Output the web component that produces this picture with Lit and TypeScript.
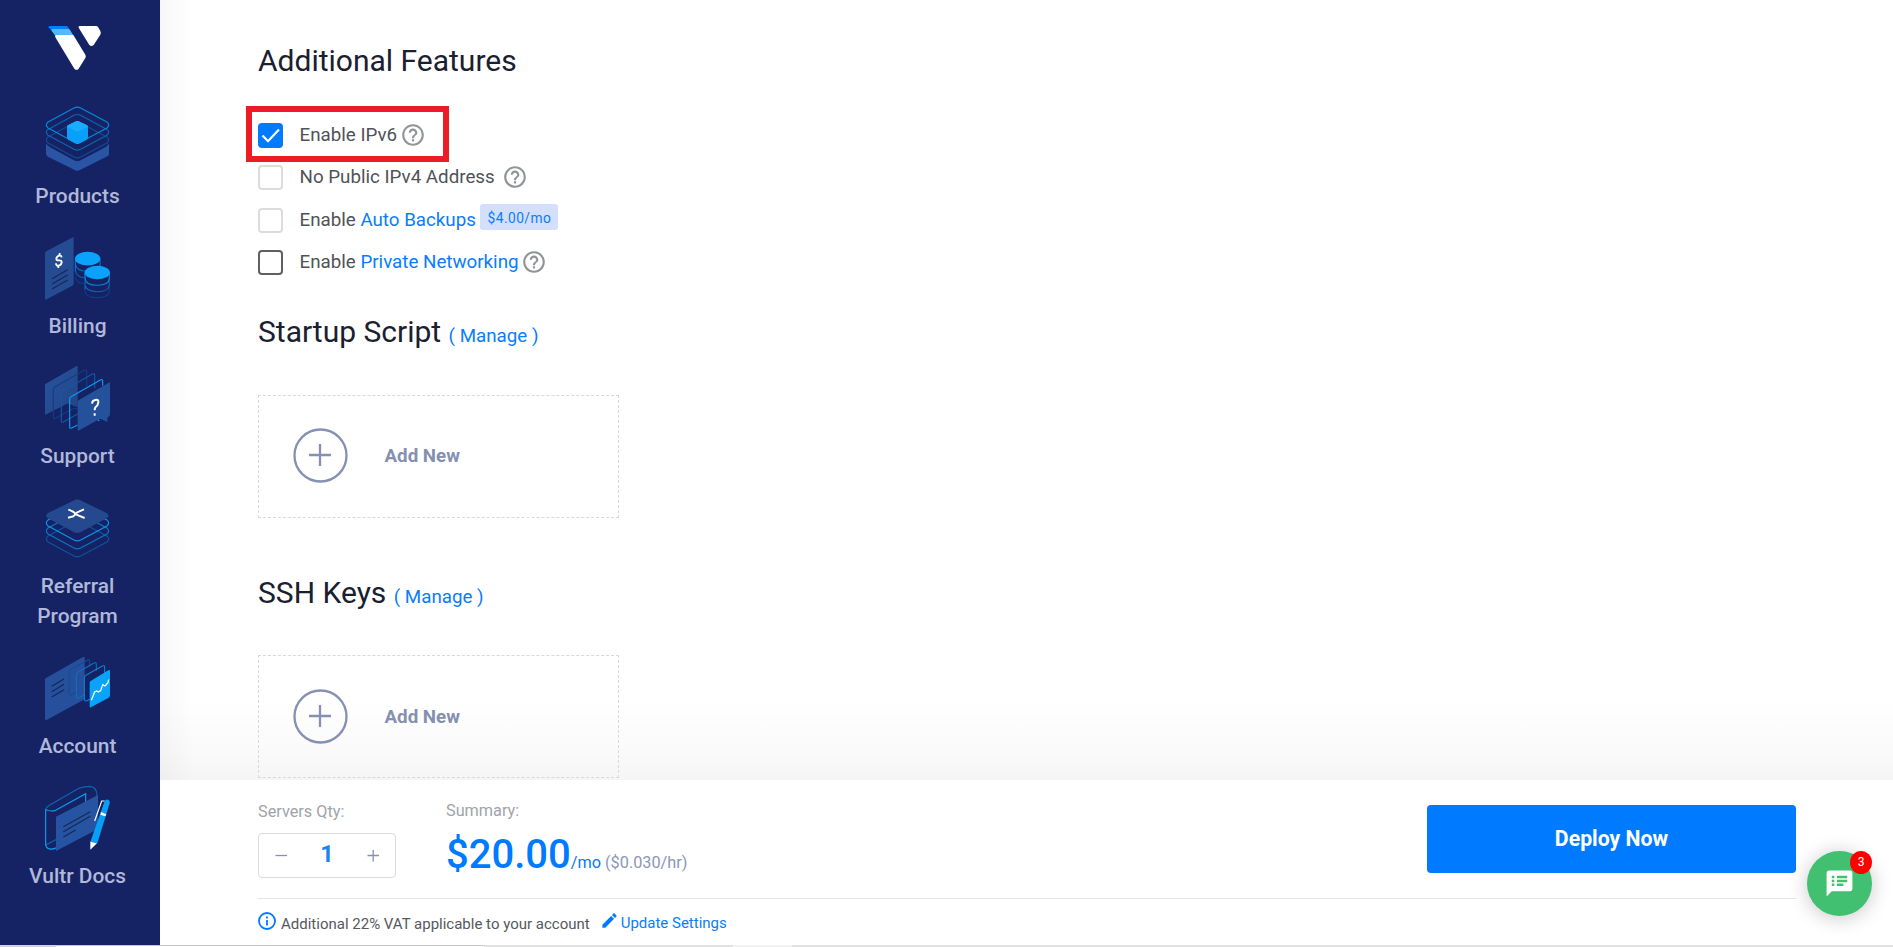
import { LitElement, html, css, svg } from "lit";
import { customElement } from "lit/decorators.js";

const help = html`<svg class="help" viewBox="0 0 24 24"><path d="M11 18h2v-2h-2v2zm1-16C6.480 2 2 6.480 2 12s4.480 10 10 10 10-4.480 10-10S17.520 2 12 2zm0 18c-4.410 0-8-3.590-8-8s3.590-8 8-8 8 3.590 8 8-3.590 8-8 8zm0-14c-2.210 0-4 1.790-4 4h2c0-1.100.9-2 2-2s2 .9 2 2c0 2-3 1.750-3 5h2c0-2.250 3-2.500 3-5 0-2.210-1.790-4-4-4z"/></svg>`;

const diamond = (y: number, c: string) =>
  svg`<path fill="none" stroke-width="3.600" stroke=${c} transform="translate(0 ${y})" d="M222 -51Q232 -56 242 -51L322 -8Q330 0 322 8L242 51Q232 56 222 51L143 8Q135 0 143 -8Z"/>`;

const icons: Record<string, unknown> = {
  products: html`<svg class="pic" viewBox="135 321 195 195">
    <path fill="#2a55a5" d="M138 430Q140 437 150 442L222 481Q232 487 242 481L316 442Q325 437 327 430V462Q327 466 322 469L240 510Q232 514 224 510L144 470Q138 466 138 462Z"/>
    ${diamond(420, "#104c94")}${diamond(397, "#0d63b0")}${diamond(375, "#0a86d8")}
    <path fill="#08a0f8" d="M201 381Q201 377 205 375L228 364Q232 362 236 364L260 375Q264 377 264 381V412Q264 417 260 419L237 431Q232 433 228 431L205 419Q201 417 201 412Z"/>
    <path fill="#19acff" d="M201 380Q201 377 205 375L228 364Q232 362 236 364L260 375Q264 377 264 380L237 394Q232 396 228 394Z"/></svg>`,
  billing: html`<svg class="pic" viewBox="135 51 195 195">
    <path fill="#254c92" d="M135 99Q135 96 139 94L216 53Q221 50 221 55V190Q221 194 217 197L140 238Q135 241 135 236Z"/>
    <g fill="none" stroke="#fff" stroke-width="5.500"><path d="M185 112Q184 105 177 107Q169 110 169 117Q169 122 177 121Q185 120 185 127Q184 135 176 137Q168 138 168 130M179 99L178 108M175 136V144"/></g>
    <path d="M156 176L203 149M156 192L203 165M156 207L203 180" stroke="#162556" stroke-width="3.500"/>
    <g fill="none" stroke-width="3.200"><path stroke="#123d87" d="M226 172Q229 191 258 191"/><path stroke="#105aa7" d="M226 152Q229 173 256 174"/><path stroke="#087bcf" d="M226 132Q229 154 263 154T300 134M226 118V154M300 118V140"/></g>
    <ellipse cx="263" cy="116" rx="38" ry="20.500" fill="#0aa2fa"/>
    <g fill="none" stroke-width="3.200"><path stroke="#114283" d="M255 213Q257 233 292 233T328 213V195"/><path stroke="#1063b0" d="M255 194Q257 215 292 215T328 194V175M255 158V210"/><path stroke="#0984d7" d="M255 175Q257 196 292 196T328 175V158M255 158V175"/></g>
    <ellipse cx="292" cy="157.500" rx="38" ry="20.500" fill="#0aa2fa"/></svg>`,
  support: html`<svg class="pic" viewBox="135 441 195 195">
    <defs><linearGradient id="sg" x2="1" y2="1"><stop stop-color="#28549f"/><stop offset="1" stop-color="#234485"/></linearGradient></defs>
    <path fill="url(#sg)" d="M135 493L230 438Q233 437 233 441V562L206 551Q201 550 198 553L139 583Q135 585 135 581Z"/>
    <g fill="none" stroke-width="3.400"><path stroke="#123e84" d="M164 501Q160 503 160 510V591Q160 598 166 595L212 570Q224 562 233 568M164 501L253 451Q260 448 260 455V500"/><path stroke="#0d5aa7" d="M188 513Q184 515 184 521V602Q184 609 190 606L233 582M188 513L277 462Q284 459 284 465V505"/><path stroke="#0a9df4" d="M213 530Q209 532 209 538V620Q209 627 215 624L233 615M213 530L301 480Q308 476 308 484V497"/></g>
    <path fill="#25509a" d="M233 545Q233 542 237 540L326 488Q330 485 330 490V582Q330 588 325 591L322 593V606L304 598Q300 596 297 598L238 631Q233 634 233 629Z"/>
    <path d="M293 600l5 2" stroke="#0aa2fa" stroke-width="4"/>
    <path fill="none" stroke="#fff" stroke-width="6" d="M276 551Q277 541 286 540Q296 537 295 547Q294 556 287 561Q284 564 284 571M284 580V587"/></svg>`,
  referral: html`<svg class="pic" viewBox="135 51 195 195">
    ${diamond(177, "#0e529c")}${diamond(153, "#0a75c6")}${diamond(129, "#0995e9")}
    <path fill="#24498f" d="M220 62Q232 55 244 62L320 99Q331 107 320 115L244 155Q232 162 220 155L144 115Q133 107 144 99Z"/>
    <path fill="none" stroke="#fff" stroke-width="6" d="M205 89L213 92Q220 94 223 98Q228 104 236 107L254 114M204 113L212 111Q221 110 224 105Q228 97 238 94L252 88"/></svg>`,
  account: html`<svg class="pic" viewBox="135 531 195 195">
    <path fill="#26509b" d="M135 598Q135 596 138 594L249 531Q254 529 254 534V658L141 719Q135 722 135 716Z"/>
    <path d="M155 619L192 597M155 635L192 613M155 651L192 629" stroke="#162556" stroke-width="3.500"/>
    <g fill="none" stroke-width="3.200"><path stroke="#174b95" d="M214 568Q208 571 208 577V640Q208 648 215 644L230 636M214 568L263 540Q269 537 269 544V560"/><path stroke="#0d70c0" d="M235 576Q229 579 229 585V649Q229 658 236 654L254 644M235 576L282 549Q289 546 289 553V572"/><path stroke="#0a83d5" d="M259 585Q253 588 253 594V655Q253 666 261 662L269 658M259 585L307 558Q314 555 314 562V579"/></g>
    <path fill="#08a4fb" d="M269 608Q269 605 272 603L325 571Q330 568 330 573V645Q330 650 326 653L274 681Q269 684 269 679Z"/>
    <path fill="none" stroke="#fff" stroke-width="3.800" d="M274 661L284 636L290 633L295 636L302 632L308 614L315 618L324 608L326 599"/></svg>`,
  docs: html`<svg class="pic" viewBox="135 201 195 195">
    <g fill="none" stroke-width="3.400"><path stroke="#0b67b5" d="M137 268Q137 264 148 256L237 205Q252 199 270 199Q290 202 291 224V236M137 375L170 358M170 383Q160 390 148 388"/><path stroke="#08a0f6" d="M137 268V374Q139 388 155 387L168 384M137 268Q148 276 167 271L257 221V250"/></g>
    <path fill="#2654a2" d="M168 290L294 225V327L168 393Z"/>
    <path d="M190 320L271 275M190 335L271 289M190 351L227 330" stroke="#17284f" stroke-width="3.500"/>
    <path fill="none" stroke="#fff" stroke-width="3.500" d="M284 303L305 243H314"/>
    <path fill="#08a0f6" d="M314 243Q318 237 325 239Q331 243 329 250L292 370L271 366Z"/>
    <path fill="#fff" d="M303 276L319 283L316 289L301 284ZM271 365L291 370L271 389Z"/></svg>`,
};

const nav: [string, string][] = [
  ["products", "Products"], ["billing", "Billing"], ["support", "Support"],
  ["referral", "Referral Program"], ["account", "Account"], ["docs", "Vultr Docs"],
];

@customElement("side-nav")
class SideNav extends LitElement {
  static styles = css`
    :host { display: block; background: #152364; width: 160px; box-sizing: border-box; padding: 25px 5px 0 0; }
    .logo { display: block; width: 54px; height: 46px; margin: 0 0 36px 48px; }
    .item { display: flex; flex-direction: column; align-items: center; margin-bottom: 26px; }
    .pic { width: 65px; height: 65px; overflow: visible; display: block; margin-bottom: 9px; }
    .label { font: 500 20.900px/30px Roboto, sans-serif; color: #b1b8d9; text-align: center; width: 110px; }
  `;
  render() {
    return html`<svg class="logo" viewBox="144 75 162 138">
        <path fill="#0080ff" d="M149 78H198Q202 78 204 81L213 96H158L146 82Q145 78 149 78Z"/>
        <path fill="#51b9ff" d="M158 87H204Q208 87 210 90L220 106L168 110L155 92Q154 87 158 87Z"/>
        <path fill="#fff" d="M168 105H220L256 164Q259 169 256 174L236 206Q230 213 223 206L166 112Q164 106 168 105ZM239 78H288Q292 78 294 81L301 93Q304 98 301 104L281 135Q274 141 268 135L236 83Q234 78 239 78Z"/></svg>
      ${nav.map(([k, l]) => html`<div class="item">${icons[k]}<div class="label">${l}</div></div>`)}`;
  }
}

@customElement("app-root")
class AppRoot extends LitElement {
  static styles = css`
    :host { display: block; width: 1893px; height: 947px; overflow: hidden; position: relative; font-family: Roboto, sans-serif; background: #fff; }
    .shell { display: grid; grid-template-columns: 160px 1733px; height: 945px; }
    .right { display: grid; grid-template-rows: 780px 165px; }
    .main { padding: 43px 0 0 98px; box-sizing: border-box; overflow: hidden;
      background: linear-gradient(90deg, rgba(0,0,0,.03), transparent 34px), linear-gradient(0deg, rgba(0,0,0,.04), rgba(0,0,0,.018) 30px, transparent 80px), #fff; }
    h2 { margin: 0; font-weight: 400; font-size: 30px; line-height: 36px; color: #1a202f; }
    .manage { font-size: 18.750px; color: #0a7cff; }
    .opts { margin-top: 44px; height: 191px; display: grid; grid-auto-rows: 42.400px; align-content: start; }
    .opt { display: flex; align-items: flex-start; font-size: 18.750px; line-height: 24px; color: #4f5357; white-space: pre; }
    .box { width: 25px; height: 25px; box-sizing: border-box; border: 2px solid #dcdcdc; border-radius: 4px; margin-right: 16.500px; flex: none; }
    .box.on { border: 0; background: #007bff; }
    .box.on svg { display: block; width: 25px; height: 25px; }
    .box.dark { border-color: #5f6064; }
    .link { color: #0a7cff; }
    .help { width: 26px; height: 26px; fill: #919599; margin: -1px 0 0 2.500px; }
    .tag { background: #d3dffb; color: #0a7cff; border-radius: 3px; font-size: 13.750px; letter-spacing: .45px; width: 78px; height: 26px; line-height: 28px; text-align: center; margin: -4px 0 0 4.500px; }
    .add { width: 361px; height: 123px; box-sizing: border-box; border: 1px dashed #d9d9d9; margin: 41px 0 57px; display: flex; align-items: center; padding: 0 0 1px 34px; }
    .add.last { margin-top: 40px; padding-bottom: 0; }
    .add svg { width: 56px; height: 56px; margin-right: 35.500px; fill: none; stroke: #8590b3; stroke-width: 2.300; }
    .add b { font-size: 18.750px; font-weight: 700; color: #8590b0; }
    .foot { background: #fff; padding: 0 97px 0 98px; display: flex; flex-direction: column; }
    .bar { height: 119px; border-bottom: 1px solid #e3e5ea; display: flex; align-items: flex-start; box-sizing: border-box; }
    .cap { font-size: 16.250px; line-height: 20px; color: #a0a4a9; }
    .qty { padding-top: 22px; width: 188px; }
    .step { width: 138px; height: 45px; margin-top: 11px; box-sizing: border-box; border: 1px solid #d9dce0; border-radius: 4px; display: flex; align-items: center; justify-content: space-between; padding: 0 14px; }
    .step svg { width: 16px; height: 16px; margin-top: -2px; stroke: #8590b3; stroke-width: 1.300; fill: none; }
    .step b { font-size: 23.750px; font-weight: 700; color: #1a85ec; margin-top: -3px; }
    .sum { padding-top: 21px; flex: 1; }
    .price { display: flex; align-items: baseline; color: #007bff; font-size: 16.250px; line-height: 46px; white-space: pre; margin-top: 11px; }
    .price b { font-size: 40px; font-weight: 500; }
    .hr { color: #8c96b8; }
    .deploy { margin-top: 25px; width: 369px; height: 68px; border: 0; border-radius: 4px; background: #007bff; color: #fff; font: 700 21.250px Roboto, sans-serif; padding: 0 0 1px; }
    .vat { display: flex; align-items: flex-start; padding-top: 11px; font-size: 15px; line-height: 28px; color: #55595e; }
    .info { width: 20px; height: 20px; margin: 1px 4px 0 -1px; }
    .pen { width: 19px; height: 19px; margin: 1px 2px 0 10px; fill: #007bff; }
    .vat .link { line-height: 26px; }
    .strip { height: 2px; background: linear-gradient(90deg, #d3d3e2 56px, transparent 56px, transparent 484px, #e0e0e0 484px, #e0e0e0 733px, #f2f2f2 733px, #f2f2f2 792px, #e0e0e0 792px), linear-gradient(#c6c6c6 1px, #fff 1px); }
    .mark { position: absolute; left: 246px; top: 106px; width: 203px; height: 56px; box-sizing: border-box; border: 6px solid #ed1c24; }
    .chat { position: absolute; left: 1807px; top: 851px; width: 65px; height: 65px; border-radius: 50%; background: #42c072; box-shadow: 0 2px 20px rgba(0,0,0,.22); }
    .chat svg { display: block; width: 31px; height: 31px; margin: 17px; fill: #fff; }
    .count { position: absolute; right: 0; top: 0; width: 22px; height: 23px; line-height: 23px; border-radius: 50%; background: #f00; color: #fff; font-size: 12px; text-align: center; }
  `;
  add(cls = "add") {
    return html`<div class=${cls}><svg viewBox="0 0 56 56"><circle cx="27.500" cy="27.500" r="26"/><path d="M16 27H38M27 16V38"/></svg><b>Add New</b></div>`;
  }
  render() {
    return html`
      <div class="shell">
        <side-nav></side-nav>
        <div class="right">
          <main class="main">
            <h2>Additional Features</h2>
            <div class="opts">
              <div class="opt"><span class="box on"><svg viewBox="0 0 25 25"><path d="M4.500 12.500L10 18.200L21 6.500" fill="none" stroke="#fff" stroke-width="2.200"/></svg></span><span class="t">Enable IPv6</span>${help}</div>
              <div class="opt"><span class="box"></span><span class="t">No Public IPv4 Address </span>${help}</div>
              <div class="opt"><span class="box"></span><span class="t">Enable <span class="link">Auto Backups</span></span><span class="tag">$4.00/mo</span></div>
              <div class="opt"><span class="box dark"></span><span class="t">Enable <span class="link">Private Networking</span></span>${help}</div>
            </div>
            <h2>Startup Script <span class="manage">( Manage )</span></h2>
            ${this.add()}
            <h2>SSH Keys <span class="manage">( Manage )</span></h2>
            ${this.add("add last")}
          </main>
          <footer class="foot">
            <div class="bar">
              <div class="qty"><div class="cap">Servers Qty:</div>
                <div class="step"><svg viewBox="0 0 16 16"><path d="M2.500 8.500H14"/></svg><b>1</b><svg viewBox="0 0 16 16"><path d="M2.500 8.500H14M8.200 3V14.500"/></svg></div></div>
              <div class="sum"><div class="cap">Summary:</div>
                <div class="price"><b>$20.00</b>/mo <span class="hr">($0.030/hr)</span></div></div>
              <button class="deploy">Deploy Now</button>
            </div>
            <div class="vat"><svg class="info" viewBox="0 0 20 20" fill="none" stroke="#007bff" stroke-width="1.800"><circle cx="10" cy="10" r="8"/><path d="M10 9V14.500M10 5.500V7.500"/></svg><span>Additional 22% VAT applicable to your account</span>
              <svg class="pen" viewBox="0 0 24 24"><path d="M3 17.250V21h3.750L17.810 9.940l-3.750-3.750L3 17.250zM20.710 7.040c.39-.39.39-1.020 0-1.410l-2.340-2.340c-.39-.39-1.020-.39-1.410 0l-1.830 1.830 3.750 3.750 1.830-1.830z"/></svg><span class="link">Update Settings</span></div>
          </footer>
        </div>
      </div>
      <div class="strip"></div>
      <div class="mark"></div>
      <div class="chat"><svg viewBox="0 0 24 24"><path d="M20 2H4c-1.100 0-1.990.9-1.990 2L2 22l4-4h14c1.100 0 2-.9 2-2V4c0-1.100-.9-2-2-2zM8 14H6v-2h2v2zm0-3H6V9h2v2zm0-3H6V6h2v2zm7 6h-5v-2h5v2zm3-3h-8V9h8v2zm0-3h-8V6h8v2z"/></svg><span class="count">3</span></div>`;
  }
}
